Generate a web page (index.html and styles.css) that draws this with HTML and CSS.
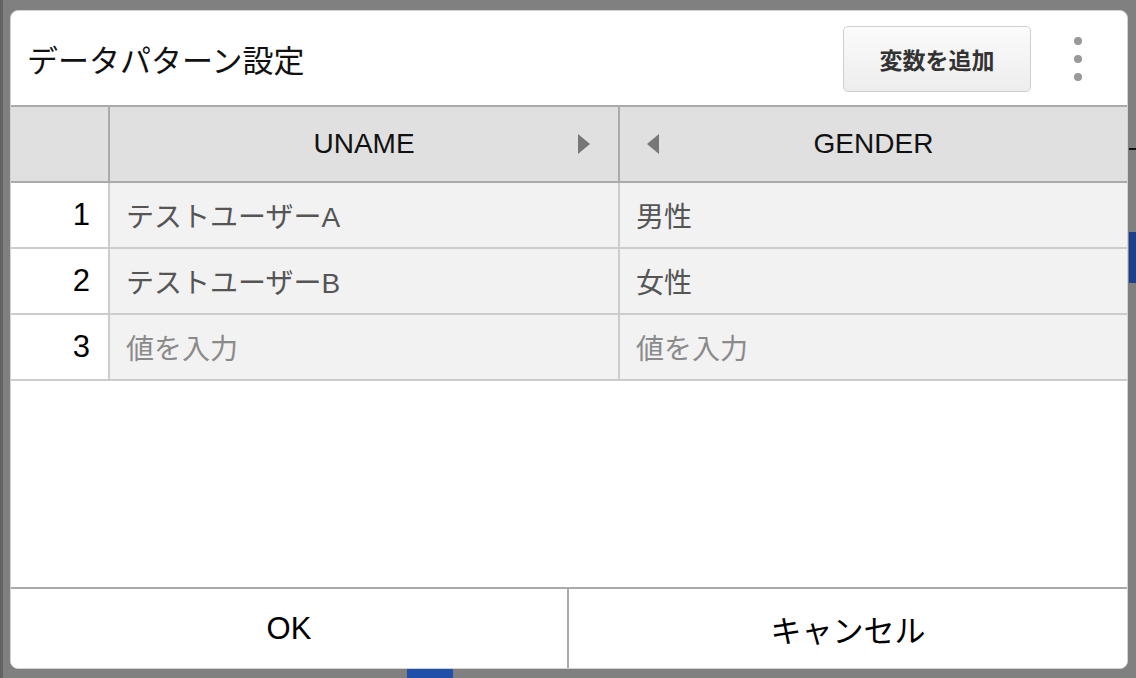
FILE: index.html
```html
<!DOCTYPE html>
<html lang="ja">
<head>
<meta charset="utf-8">
<title>データパターン設定</title>
<link rel="stylesheet" href="styles.css">
</head>
<body>
<div class="backdrop">
  <div class="bg-line"></div>
  <div class="bg-blue"></div>
  <div class="bg-label"><span class="bg-mark"></span><span class="bg-badge"></span></div>
  <div class="dialog">
    <div class="dlg-header">
      <h1 class="title">データパターン設定</h1>
      <button class="add-btn">変数を追加</button>
      <div class="kebab"><span></span><span></span><span></span></div>
    </div>
    <div class="grid">
      <div class="row head">
        <div class="cell num"></div>
        <div class="cell hcol">UNAME<span class="tri tri-right"></span></div>
        <div class="cell hcol last"><span class="tri tri-left"></span>GENDER</div>
      </div>
      <div class="row">
        <div class="cell num">1</div>
        <div class="cell data">テストユーザーA</div>
        <div class="cell data last">男性</div>
      </div>
      <div class="row">
        <div class="cell num">2</div>
        <div class="cell data">テストユーザーB</div>
        <div class="cell data last">女性</div>
      </div>
      <div class="row">
        <div class="cell num">3</div>
        <div class="cell data placeholder">値を入力</div>
        <div class="cell data placeholder last">値を入力</div>
      </div>
    </div>
    <div class="spacer"></div>
    <div class="footer">
      <button class="foot-btn ok">OK</button>
      <button class="foot-btn">キャンセル</button>
    </div>
  </div>
</div>
</body>
</html>
```

FILE: styles.css
```css
html, body {
  margin: 0;
  padding: 0;
  background: #808080;
  font-family: "Liberation Sans", "Noto Sans CJK JP", sans-serif;
}

.backdrop {
  position: relative;
  width: 1136px;
  height: 678px;
  box-sizing: border-box;
  border-left: 3px solid #636363;
  padding: 10px 0 0 7px;
  overflow: hidden;
}

.bg-line {
  position: absolute;
  left: 1126px;
  top: 148px;
  width: 10px;
  height: 2px;
  background: #111;
}

.bg-blue {
  position: absolute;
  left: 1126px;
  top: 232px;
  width: 10px;
  height: 51px;
  background: #1f3f8a;
}

.bg-label {
  position: absolute;
  left: 352px;
  top: 664px;
  display: flex;
  align-items: flex-start;
  gap: 8px;
}

.bg-mark {
  width: 44px;
  height: 20px;
  border-top: 3px solid #333;
}

.bg-badge {
  width: 46px;
  height: 20px;
  background: #1f4fa8;
}

.dialog {
  position: relative;
  z-index: 2;
  width: 1118px;
  height: 659px;
  box-sizing: border-box;
  border: 1px solid #d2d2d2;
  border-radius: 8px;
  background: #fff;
  overflow: hidden;
  display: flex;
  flex-direction: column;
}

.dlg-header {
  height: 94px;
  flex: none;
  display: flex;
  align-items: center;
  padding-left: 16px;
  border-bottom: 2px solid #aaa;
}

.title {
  margin: 0 auto 0 0;
  font-size: 31px;
  font-weight: normal;
  color: #111;
}

.add-btn {
  width: 188px;
  height: 66px;
  margin-top: 1px;
  border: 1px solid #cfcfcf;
  border-radius: 5px;
  background: linear-gradient(#fbfbfb, #ededed);
  font-family: "Liberation Sans", "Noto Sans CJK JP", sans-serif;
  font-size: 23px;
  font-weight: bold;
  color: #333;
  padding: 0;
}

.kebab {
  width: 20px;
  margin: 2px 39px 0 37px;
  display: flex;
  flex-direction: column;
  align-items: center;
  gap: 10px;
}

.kebab span {
  width: 8px;
  height: 8px;
  border-radius: 50%;
  background: #999;
}

.grid {
  flex: none;
}

.row {
  display: grid;
  grid-template-columns: 99px 510px 507px;
  height: 66px;
  box-sizing: border-box;
  border-bottom: 2px solid #ccc;
}

.row.head {
  height: 76px;
  border-bottom: 2px solid #aaa;
  background: #e0e0e0;
}

.cell {
  position: relative;
  display: flex;
  align-items: center;
  box-sizing: border-box;
  border-right: 2px solid #ccc;
  font-size: 28px;
}

.cell.last {
  border-right: none;
}

.head .cell {
  border-right-color: #aaa;
}

.head .cell.last {
  border-right: none;
}

.hcol {
  justify-content: center;
  color: #111;
}

.num {
  justify-content: flex-end;
  padding-right: 18px;
  background: #fff;
  color: #000;
  font-size: 31px;
}

.head .num {
  background: #e0e0e0;
}

.data {
  background: #f2f2f2;
  padding-left: 16px;
  color: #555;
}

.data.placeholder {
  color: #8a8a8a;
}

.tri {
  position: absolute;
  top: 50%;
  margin-top: -10px;
  width: 0;
  height: 0;
  border-top: 10px solid transparent;
  border-bottom: 10px solid transparent;
}

.tri-right {
  right: 28px;
  border-left: 12px solid #777;
}

.tri-left {
  left: 27px;
  border-right: 12px solid #777;
}

.spacer {
  flex: 1;
}

.footer {
  flex: none;
  height: 81px;
  box-sizing: border-box;
  border-top: 2px solid #aaa;
  display: flex;
}

.foot-btn {
  flex: 1;
  border: none;
  background: #fff;
  font-family: "Liberation Sans", "Noto Sans CJK JP", sans-serif;
  font-size: 31px;
  color: #000;
  padding: 0;
}

.foot-btn.ok {
  flex: none;
  width: 558px;
  border-right: 2px solid #aaa;
}
```
